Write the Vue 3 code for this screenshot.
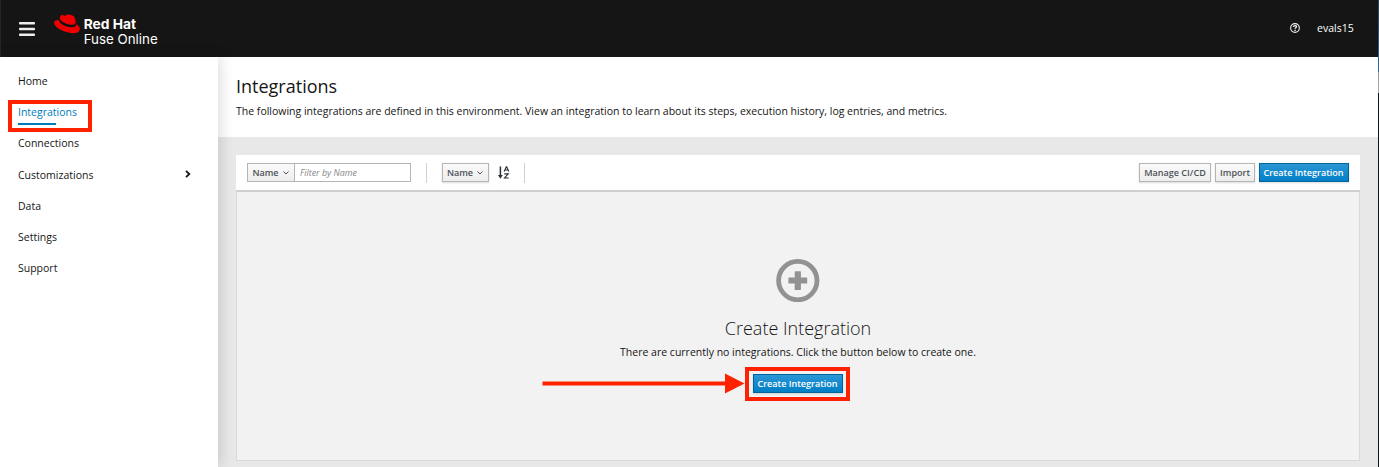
<script setup>
const navItems = [
  { label: 'Home' },
  { label: 'Integrations', active: true },
  { label: 'Connections' },
  { label: 'Customizations', expandable: true },
  { label: 'Data' },
  { label: 'Settings' },
  { label: 'Support' },
]
</script>

<template>
  <div class="page">
    <div class="app">
      <header class="masthead">
        <svg class="burger" width="16" height="14" viewBox="0 0 16 14">
          <g fill="#ededed">
            <rect width="16" height="2.6" rx=".8" />
            <rect y="5.7" width="16" height="2.6" rx=".8" />
            <rect y="11.4" width="16" height="2.6" rx=".8" />
          </g>
        </svg>
        <svg class="brand" width="106" height="36" viewBox="0 0 106 36">
          <path fill="#e00" d="M6.1 3.8C6.6 2.1 7.6 1.8 9 2.2L11.5 2.8C13 1.2 14.2 1.2 16 1.8C19 2.6 20.4 3.3 21 5.5L22.4 11.2C25.6 13 26.2 15 25.6 17.2C24.6 20.4 19.6 21 13.5 19.3C6 17.3.4 13.3.1 9.900C-.1 7.6 2.2 7.1 5.1 7.3Z" />
          <path fill="#111" d="M5 7.3C5.3 10.6 11 13.9 17.2 14.2C20.4 14.3 22.5 13.4 22.4 11.2L21.7 8.9C21.8 11.2 20 12 17 11.7C11.6 11.2 6.3 8.2 5.7 4.9Z" />
          <text class="brand-bold" x="29.7" y="15.5" textLength="52.5" lengthAdjust="spacingAndGlyphs">Red Hat</text>
          <text class="brand-light" x="29.7" y="30.5" textLength="74" lengthAdjust="spacingAndGlyphs">Fuse Online</text>
        </svg>
        <svg class="help" width="10" height="10" viewBox="0 0 10 10" fill="none" stroke="#eee">
          <circle cx="5" cy="5" r="4.35" stroke-width="1.1" />
          <path d="M3.4 3.9C3.6 2.1 6.6 2.2 6.5 3.8C6.4 4.8 5.1 4.8 5.1 5.8" stroke-width="1.4" />
          <path d="M5.1 6.7V8" stroke-width="1.4" />
        </svg>
        <span class="user">evals15</span>
      </header>

      <div class="body">
        <nav class="sidebar">
          <a v-for="item in navItems" :key="item.label" class="nav-item" :class="{ active: item.active }">
            <span class="nav-label">{{ item.label }}</span>
            <svg v-if="item.expandable" class="chevron" width="6" height="8" viewBox="0 0 6 8">
              <path d="M1 .9L4.3 4L1 7.1" fill="none" stroke="#151515" stroke-width="1.8" />
            </svg>
          </a>
        </nav>

        <main class="main">
          <section class="heading">
            <h1>Integrations</h1>
            <p>The following integrations are defined in this environment. View an integration to learn about its steps, execution history, log entries, and metrics.</p>
          </section>

          <section class="content">
            <div class="toolbar">
              <button class="btn filter">Name
                <svg width="6" height="4" viewBox="0 0 6 4"><path d="M.5 .5L3 3L5.5 .5" fill="none" stroke="#4d5258" /></svg>
              </button>
              <input class="filter-input" placeholder="Filter by Name" />
              <i class="divider"></i>
              <button class="btn sort">Name
                <svg width="6" height="4" viewBox="0 0 6 4"><path d="M.5 .5L3 3L5.5 .5" fill="none" stroke="#4d5258" /></svg>
              </button>
              <svg class="az" width="12" height="14" viewBox="0 0 12 14">
                <path d="M2.4 .5V10" stroke="#292e34" stroke-width="1.5" />
                <path d="M0 9H4.8L2.4 12.7Z" fill="#292e34" />
                <path d="M6.2 5.5L8.3 .7H8.7L10.8 5.5M7 4H10M6.3 7.9H10.3L6.5 12H10.7" fill="none" stroke="#292e34" stroke-width="1.1" />
              </svg>
              <i class="divider last"></i>
              <div class="actions">
                <button class="btn cicd">Manage CI/CD</button>
                <button class="btn import">Import</button>
                <button class="btn primary">Create Integration</button>
              </div>
            </div>

            <div class="empty">
              <svg class="plus" width="44" height="44" viewBox="0 0 44 44">
                <circle cx="21.8" cy="22.6" r="19.2" fill="none" stroke="#929292" stroke-width="4.8" />
                <path transform="translate(-.2 .6)" d="M19.500 12.700h5q.6 0 .6.600v5.700h5.700q.6 0 .6.600v4.800q0 .6-.6.600h-5.700v5.700q0 .6-.6.600h-5q-.6 0-.6-.600v-5.700h-5.700q-.6 0-.6-.600v-4.800q0-.6.6-.600h5.700v-5.700q0-.6.6-.600z" fill="#929292" />
              </svg>
              <h2>Create Integration</h2>
              <p>There are currently no integrations. Click the button below to create one.</p>
              <button class="btn primary">Create Integration</button>
            </div>
          </section>
        </main>
      </div>
    </div>
    <div class="edge"></div>

    <div class="mark nav-mark"></div>
    <div class="mark button-mark"></div>
    <svg class="arrow" width="204" height="22" viewBox="0 0 204 22">
      <path d="M.5 8.4H183V.6L202.5 10.6L183 20.5V12.6H.5Z" fill="#ff2200" />
    </svg>
  </div>
</template>

<style>
html, body { overflow: hidden; }
</style>

<style scoped>
* { box-sizing: border-box; }
.page {
  position: relative;
  display: flex;
  width: 1379px;
  height: 467px;
  overflow: hidden;
  font-family: "Open Sans", "Noto Sans", sans-serif;
  color: #151515;
}
.app { width: 1378px; display: flex; flex-direction: column; }
.edge {
  width: 1px;
  background: linear-gradient(#28435b 0, #3c6690 72px, #999 72px, #aaa 93px, #10121c 93px);
}
.masthead {
  flex: 0 0 57px;
  display: flex;
  align-items: center;
  background: #151515;
  border-left: 1px solid #252525;
}
.burger { margin-left: 18px; margin-top: 1px; }
.brand { margin-left: 19px; margin-top: 5px; }
.brand-bold, .brand-light { font-family: Inter, sans-serif; fill: #fff; }
.brand-bold { font-size: 13.2px; font-weight: 700; }
.brand-light { font-size: 13.4px; font-weight: 400; }
.help { margin-left: auto; margin-top: -1px; }
.user { width: 37px; margin: -2px 24px 0 17px; font-size: 10.5px; color: #fff; white-space: nowrap; }
.body { flex: 1; display: flex; min-height: 0; }
.sidebar {
  width: 218px;
  padding-top: 9px;
  background: #fff;
  box-shadow: 2px 0 14px rgba(0, 0, 0, .15);
  z-index: 1;
}
.nav-item {
  height: 31.2px;
  padding: 0 27px 0 18px;
  display: flex;
  align-items: center;
  justify-content: space-between;
  font-size: 10.5px;
}
.nav-item.active { color: #007bba; }
.nav-label { position: relative; line-height: 15px; }
.active .nav-label::after {
  content: "";
  position: absolute;
  left: 0;
  bottom: -5px;
  width: 38px;
  height: 2px;
  background: #007bba;
}
.chevron { margin-top: -2px; }
.main { flex: 1; display: flex; flex-direction: column; background: #e8e8e8; }
.heading { height: 80px; padding: 16px 18px 0; background: #fff; }
h1 { margin: 0; font-size: 18px; line-height: 26px; font-weight: 400; }
.heading p { margin: 4px 0 0; font-size: 10.5px; line-height: 16px; white-space: nowrap; }
.content { padding: 18px 18px 0; }
.toolbar {
  height: 35px;
  display: flex;
  align-items: center;
  padding: 0 11px;
  background: #fff;
}
.btn {
  height: 19px;
  padding: 0;
  display: inline-flex;
  align-items: center;
  justify-content: center;
  border: 1px solid #b5b5b5;
  border-radius: 0;
  background: linear-gradient(#fafafa, #ededed);
  box-shadow: 0 1px 2px rgba(3, 3, 3, .15);
  color: #4d5258;
  font: 600 9.05px "Open Sans", sans-serif;
  white-space: nowrap;
}
.btn svg { margin: 1px 0 0 4px; }
.filter { width: 48px; padding-right: 1px; box-shadow: none; }
.filter-input {
  width: 117px;
  height: 19px;
  margin: 0 0 0 -1px;
  padding: 0 5px;
  border: 1px solid #b5b5b5;
  background: #fff;
  font: 8.9px "Open Sans", sans-serif;
}
.filter-input::placeholder { color: #888; font-style: italic; opacity: 1; }
.divider { width: 1px; height: 20px; margin: 0 15px; background: #d1d1d1; }
.sort { width: 47px; padding-right: 1px; }
.az { margin-left: 9px; }
.divider.last { margin-left: 14px; }
.actions { margin-left: auto; display: flex; gap: 4px; }
.cicd { width: 72px; }
.import { width: 40px; }
.primary {
  width: 90px;
  padding-right: 1px;
  border-color: #00659c;
  background: linear-gradient(#2b96d5, #007fc6);
  color: #fff;
}
.empty {
  height: 271px;
  padding-top: 66px;
  display: flex;
  flex-direction: column;
  align-items: center;
  border: 1px solid #d9d9d9;
  border-top: 2px solid #cfcfcf;
  background: #f2f2f2;
}
h2 { margin: 13px 0 0; font-size: 18px; line-height: 26px; font-weight: 300; }
.empty p { margin: 3px 0 0; font-size: 10.5px; line-height: 16px; }
.empty .btn { margin-top: 14px; }
.mark { position: absolute; border: 4px solid #ff2200; z-index: 2; }
.nav-mark { left: 8px; top: 100px; width: 84px; height: 32px; }
.button-mark { left: 745px; top: 367px; width: 105px; height: 34px; }
.arrow { position: absolute; left: 542px; top: 373px; z-index: 2; }
</style>
